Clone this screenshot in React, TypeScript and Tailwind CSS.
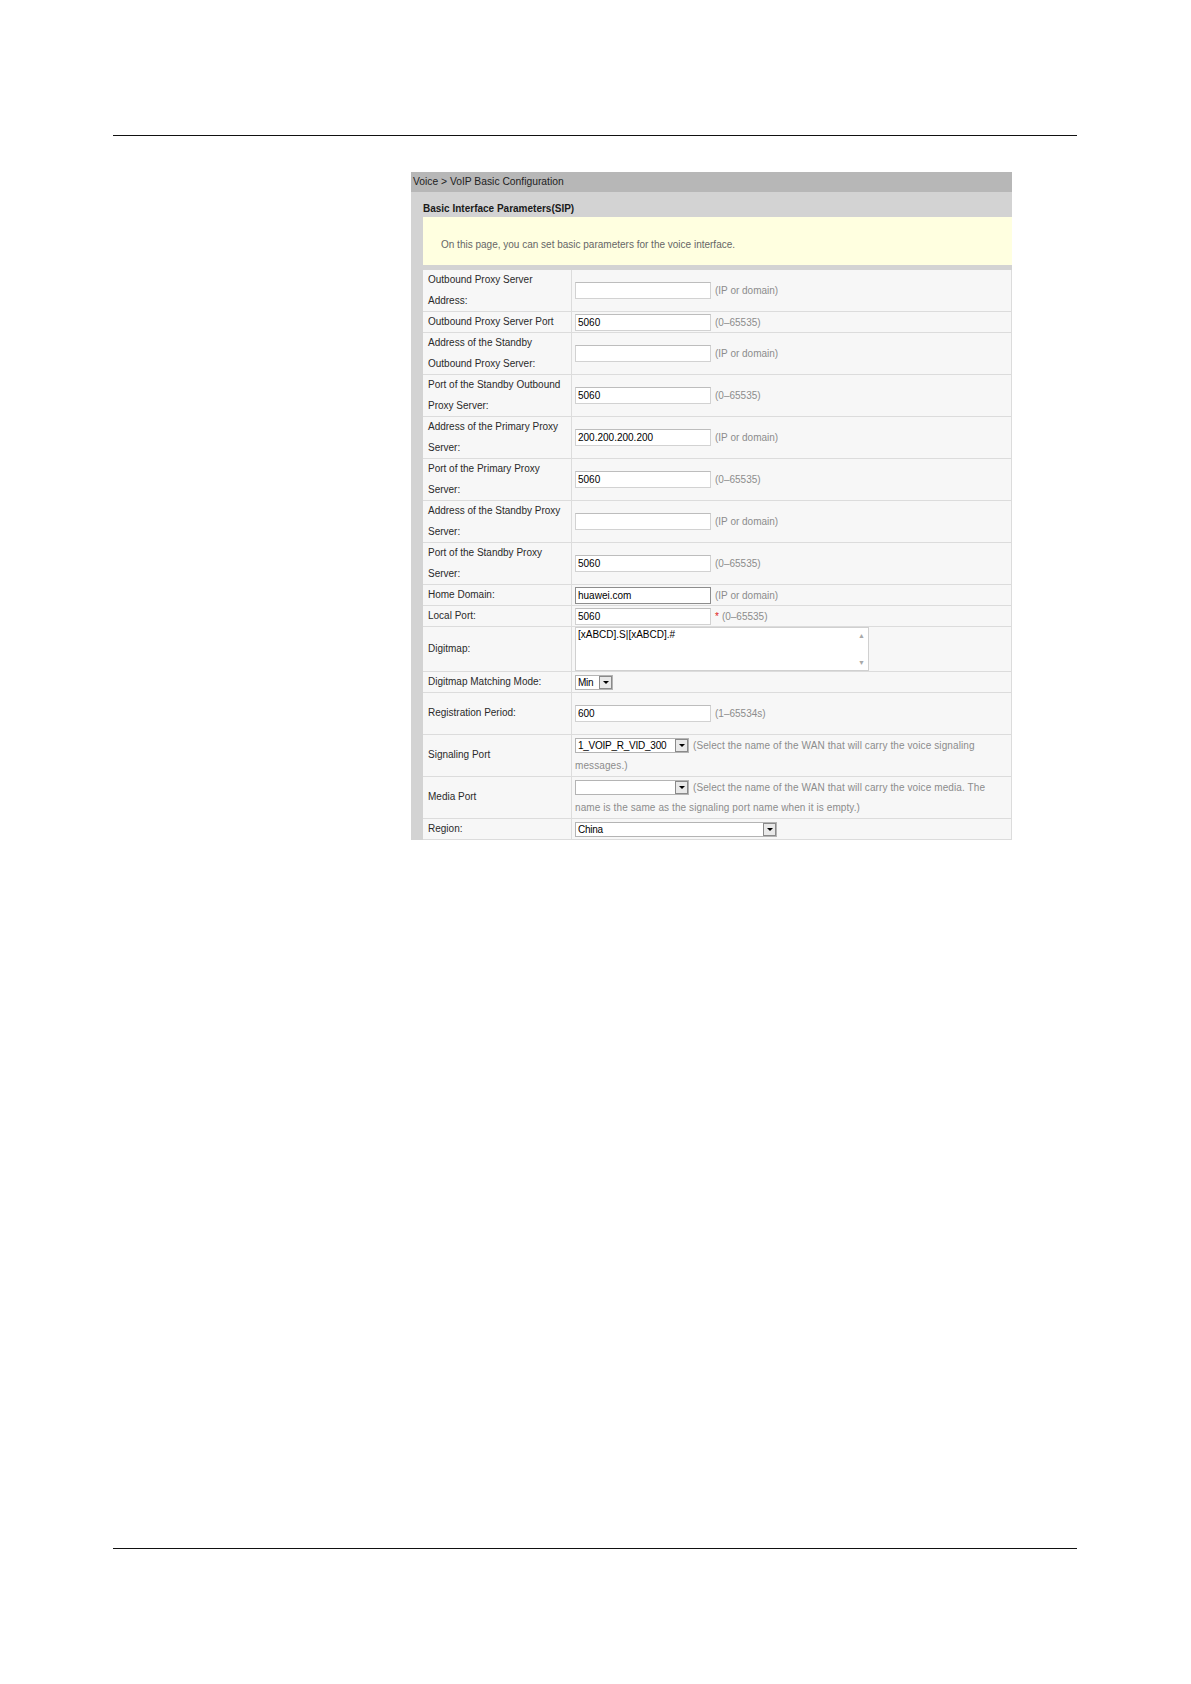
import React from "react";

type Field =
  | { kind: "input"; value: string; focused?: boolean }
  | { kind: "textarea"; value: string }
  | { kind: "select"; value: string; width: string };

interface Row {
  label: string[];
  field: Field;
  hint?: string;
  hintLines?: [string, string];
  required?: boolean;
  height: string;
}

const rows: Row[] = [
  { label: ["Outbound Proxy Server", "Address:"], field: { kind: "input", value: "" }, hint: "(IP or domain)", height: "h-[42px]" },
  { label: ["Outbound Proxy Server Port"], field: { kind: "input", value: "5060" }, hint: "(0–65535)", height: "h-[21px]" },
  { label: ["Address of the Standby", "Outbound Proxy Server:"], field: { kind: "input", value: "" }, hint: "(IP or domain)", height: "h-[42px]" },
  { label: ["Port of the Standby Outbound", "Proxy Server:"], field: { kind: "input", value: "5060" }, hint: "(0–65535)", height: "h-[42px]" },
  { label: ["Address of the Primary Proxy", "Server:"], field: { kind: "input", value: "200.200.200.200" }, hint: "(IP or domain)", height: "h-[42px]" },
  { label: ["Port of the Primary Proxy", "Server:"], field: { kind: "input", value: "5060" }, hint: "(0–65535)", height: "h-[42px]" },
  { label: ["Address of the Standby Proxy", "Server:"], field: { kind: "input", value: "" }, hint: "(IP or domain)", height: "h-[42px]" },
  { label: ["Port of the Standby Proxy", "Server:"], field: { kind: "input", value: "5060" }, hint: "(0–65535)", height: "h-[42px]" },
  { label: ["Home Domain:"], field: { kind: "input", value: "huawei.com", focused: true }, hint: "(IP or domain)", height: "h-[21px]" },
  { label: ["Local Port:"], field: { kind: "input", value: "5060" }, hint: "(0–65535)", required: true, height: "h-[21px]" },
  { label: ["Digitmap:"], field: { kind: "textarea", value: "[xABCD].S|[xABCD].#" }, height: "h-[45px]" },
  { label: ["Digitmap Matching Mode:"], field: { kind: "select", value: "Min", width: "w-[38px]" }, height: "h-[21px]" },
  { label: ["Registration Period:"], field: { kind: "input", value: "600" }, hint: "(1–65534s)", height: "h-[42px]" },
  {
    label: ["Signaling Port"],
    field: { kind: "select", value: "1_VOIP_R_VID_300", width: "w-[114px]" },
    hintLines: ["(Select the name of the WAN that will carry the voice signaling", "messages.)"],
    height: "h-[42px]",
  },
  {
    label: ["Media Port"],
    field: { kind: "select", value: "", width: "w-[114px]" },
    hintLines: [
      "(Select the name of the WAN that will carry the voice media. The",
      "name is the same as the signaling port name when it is empty.)",
    ],
    height: "h-[42px]",
  },
  { label: ["Region:"], field: { kind: "select", value: "China", width: "w-[202px]" }, height: "h-[21px]" },
];

const DropSelect = ({ value, width }: { value: string; width: string }) => (
  <span className={`${width} shrink-0 flex h-[15px] border border-[#b4b4b4] bg-white`}>
    <span className="flex-1 min-w-0 pl-[2px] leading-[13px] text-black tracking-[-0.25px] overflow-hidden whitespace-nowrap">
      {value}
    </span>
    <span className="w-[13px] h-[13px] shrink-0 bg-[#e9e9e9] border border-[#8a8a8a] flex items-center justify-center">
      <span className="w-0 h-0 border-l-[3px] border-r-[3px] border-t-[3px] border-l-transparent border-r-transparent border-t-black" />
    </span>
  </span>
);

const FieldView = ({ field }: { field: Field }) => {
  if (field.kind === "input") {
    return (
      <input
        readOnly
        value={field.value}
        className={`w-[136px] h-[17px] shrink-0 bg-white text-black pl-[2px] text-[10px] leading-[15px] border outline-none ${
          field.focused ? "border-[#8d8d8d]" : "border-[#d2d2d2] border-t-[#bdbdbd]"
        }`}
      />
    );
  }
  if (field.kind === "textarea") {
    return (
      <div className="w-[294px] h-[44px] bg-white border border-[#d0d0d0] flex">
        <div className="flex-1 pl-[2px] pt-[1px] leading-[12px] text-black">{field.value}</div>
        <div className="w-[13px] flex flex-col items-center justify-between py-[4px] text-[7px] leading-[7px] text-[#a8a8a8]">
          <span>▲</span>
          <span>▼</span>
        </div>
      </div>
    );
  }
  return <DropSelect value={field.value} width={field.width} />;
};

export default function App() {
  return (
    <div className="w-[1191px] h-[1684px] bg-white flex flex-col font-['Liberation_Sans',Arial,sans-serif] text-[10px]">
      <div className="mt-[135px] ml-[113px] w-[964px] h-px bg-[#111]" />

      <section className="mt-[36px] ml-[411px] w-[601px]">
        <div className="h-[20px] bg-[#b7b7b7] pl-[2px] leading-[20px] text-[#222] text-[10.3px]">
          Voice &gt; VoIP Basic Configuration
        </div>

        <div className="bg-[#d3d3d3] pl-[12px]">
          <h2 className="h-[25px] pt-[11px] leading-[12px] font-bold text-[#1a1a1a] text-[10px]">
            Basic Interface Parameters(SIP)
          </h2>

          <div className="h-[48px] bg-[#ffffe0] pl-[18px] pt-[22px] leading-[12px] text-[#666]">
            On this page, you can set basic parameters for the voice interface.
          </div>

          <div className="mt-[5px] border-r border-[#dcdcdc]">
            {rows.map((row, i) => (
              <div key={i} className={`${row.height} flex bg-[#f7f7f7] border-b border-[#dcdcdc]`}>
                <div className="w-[149px] shrink-0 border-r border-[#dcdcdc] pl-[5px] flex flex-col justify-center leading-[20.5px] text-[#2a2a2a]">
                  {row.label.map((line) => (
                    <span key={line} className="whitespace-nowrap">
                      {line}
                    </span>
                  ))}
                </div>

                {row.hintLines ? (
                  <div className="flex-1 pl-[3px] flex flex-col justify-center text-[#8c8c8c] tracking-[0.1px]">
                    <div className="h-[20.5px] flex items-center">
                      <FieldView field={row.field} />
                      <span className="ml-[4px] whitespace-nowrap">{row.hintLines[0]}</span>
                    </div>
                    <div className="h-[20.5px] leading-[20.5px] whitespace-nowrap">{row.hintLines[1]}</div>
                  </div>
                ) : (
                  <div className="flex-1 pl-[3px] flex items-center">
                    <FieldView field={row.field} />
                    {row.hint && (
                      <span className="ml-[4px] text-[#8c8c8c] whitespace-nowrap">
                        {row.required && <span className="text-[#e02020] mr-[3px]">*</span>}
                        {row.hint}
                      </span>
                    )}
                  </div>
                )}
              </div>
            ))}
          </div>
        </div>
      </section>

      <div className="mt-auto mb-[135px] ml-[113px] w-[964px] h-px bg-[#111]" />
    </div>
  );
}
